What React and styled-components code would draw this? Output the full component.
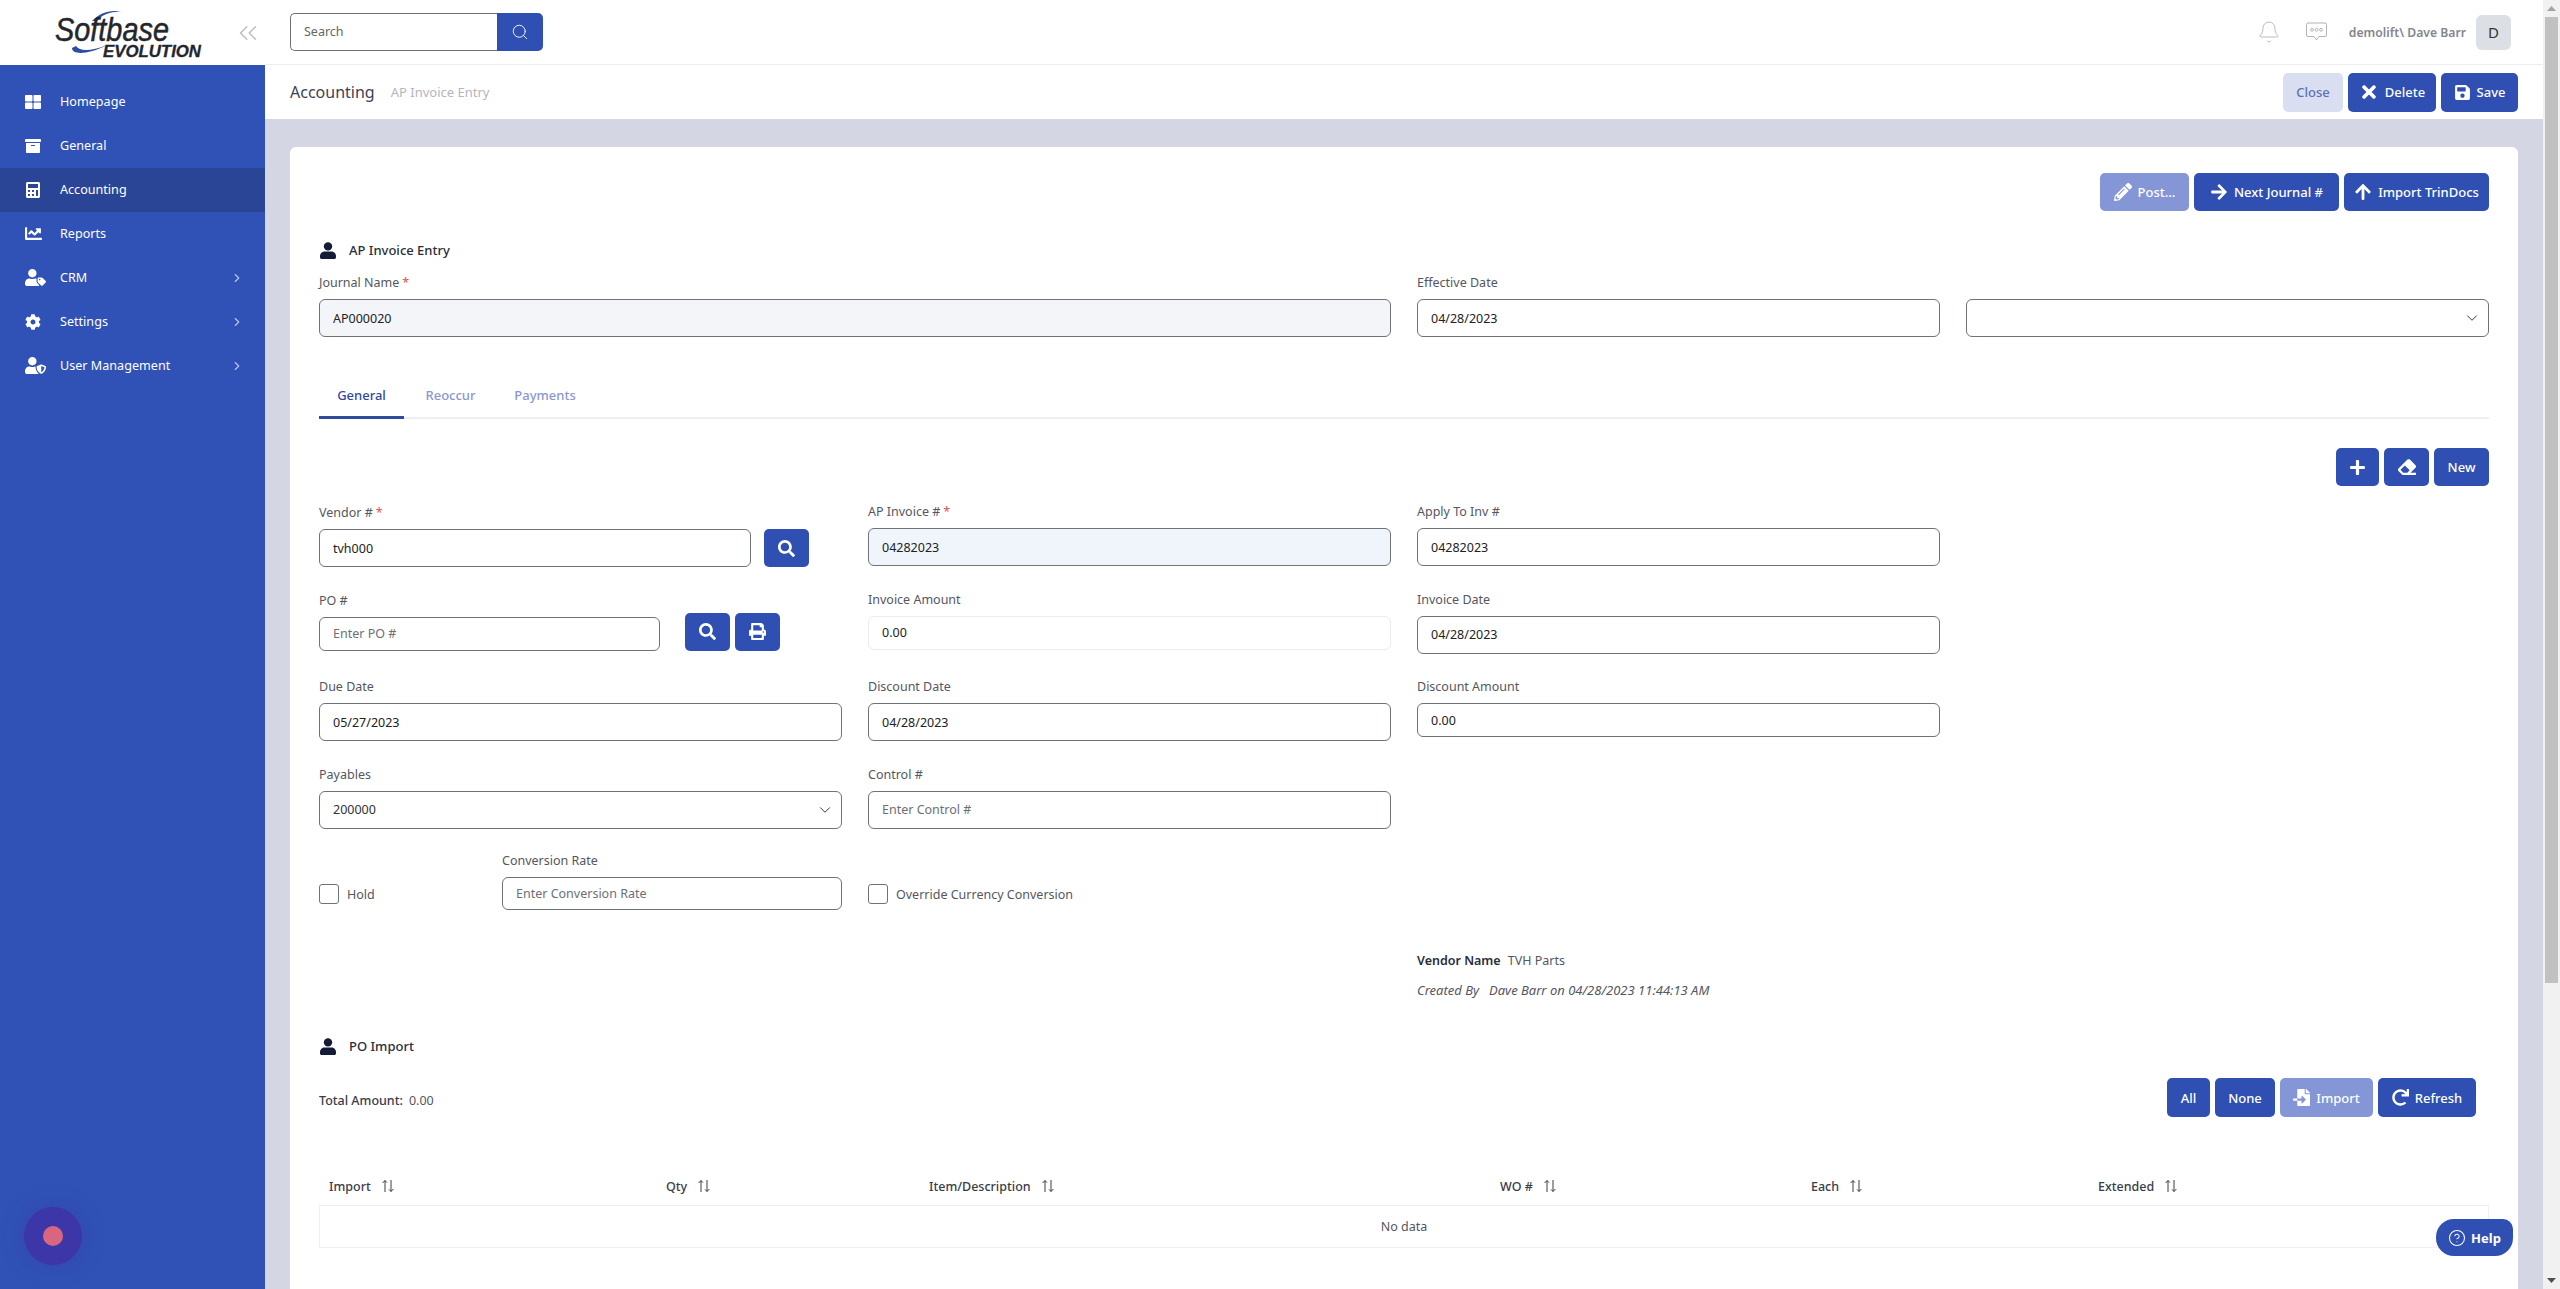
import React from 'react'
import styled, { createGlobalStyle } from 'styled-components'
import { Search, Bell, ChevronRight, ChevronDown, ChevronsLeft, CircleHelp } from 'lucide-react'
import {
  FaThLarge,
  FaArchive,
  FaCalculator,
  FaChartLine,
  FaUserTag,
  FaCog,
  FaUserShield,
  FaTimes,
  FaSave,
  FaPencilAlt,
  FaArrowRight,
  FaArrowUp,
  FaPlus,
  FaEraser,
  FaSearch,
  FaPrint,
  FaFileImport,
  FaRedo,
} from 'react-icons/fa'

const blue = '#2f4fb2'
const font = '"Noto Sans", "Open Sans", sans-serif'

const GlobalStyle = createGlobalStyle`
  * { box-sizing: border-box; }
  html, body { margin: 0; padding: 0; height: 100%; overflow: hidden; }
  body { font-family: ${font}; font-size: 13px; color: #333; background: #fff; }
`

const Shell = styled.div`
  display: flex;
  height: 1289px;
  overflow: hidden;
`

const Sidebar = styled.aside`
  width: 265px;
  flex: none;
  background: #3052b6;
  display: flex;
  flex-direction: column;
`

const Brand = styled.div`
  height: 65px;
  background: #fff;
  display: flex;
  align-items: center;
  justify-content: space-between;
  padding: 0 2px 0 50px;
  color: #bdbdc4;
`

const Nav = styled.nav`
  padding-top: 15px;
`

const NavItem = styled.div`
  height: 44px;
  display: flex;
  align-items: center;
  padding: 0 21px 1px 25px;
  color: #fff;
  font-size: 12.6px;
  background: ${p => (p.$active ? '#2b4596' : 'transparent')};

  span { flex: 1; }
`

const NavIcon = styled.div`
  width: 35px;
  display: flex;
  align-items: center;
`

const Main = styled.main`
  flex: 1;
  min-width: 0;
  background: #d5d6e4;
  overflow: hidden;
`

const TopBar = styled.header`
  height: 65px;
  background: #fff;
  border-bottom: 1px solid #eeeef2;
  display: flex;
  align-items: center;
  justify-content: space-between;
  padding: 0 32px 0 25px;
`

const SearchBox = styled.div`
  display: flex;
  width: 253px;
  height: 38px;
  margin-top: -1px;
`

const SearchInput = styled.input`
  width: 207px;
  border: 1px solid #6b7078;
  border-right: none;
  border-radius: 5px 0 0 5px;
  padding: 0 13px;
  font: 12.5px ${font};
  outline: none;
  &::placeholder { color: #666; }
`

const SearchBtn = styled.button`
  flex: 1;
  border: none;
  background: ${blue};
  border-radius: 0 5px 5px 0;
  color: #fff;
  display: flex;
  align-items: center;
  justify-content: center;
`

const UserArea = styled.div`
  display: flex;
  align-items: center;
  color: #a9a9b0;
`

const UserName = styled.span`
  margin: 0 10px 0 22px;
  font-size: 12.2px;
  font-weight: 600;
  color: #85858f;
`

const ChatWrap = styled.div`
  margin-left: 25px;
  display: flex;
`

const Avatar = styled.div`
  width: 35px;
  height: 35px;
  border-radius: 6px;
  background: #dcdfe3;
  color: #333;
  font-size: 15px;
  display: flex;
  align-items: center;
  justify-content: center;
`

const SubBar = styled.div`
  height: 54px;
  background: #fff;
  display: flex;
  align-items: center;
  padding: 0 25px;
`

const Crumb = styled.div`
  font-size: 16px;
  color: #3f4254;
`

const CrumbSub = styled.div`
  font-size: 13px;
  color: #b5b5c3;
  margin-left: 16px;
  flex: 1;
`

const ButtonRow = styled.div`
  display: flex;
  justify-content: flex-end;
  gap: 5px;
  margin-right: ${p => p.$inset || 0}px;
`

const Btn = styled.button`
  width: ${p => p.$w}px;
  height: ${p => p.$h || 38}px;
  flex: none;
  border: none;
  border-radius: 5px;
  font: 500 13px ${font};
  display: flex;
  align-items: center;
  justify-content: center;
  gap: 6px;
  padding: 0;
  color: ${p => (p.$kind === 'soft' ? '#5f70b5' : '#fff')};
  background: ${p => (p.$kind === 'soft' ? '#d9dff1' : p.$kind === 'muted' ? '#8496d6' : blue)};
`

const Content = styled.div`
  padding: 28px 25px 0;
`

const Card = styled.section`
  background: #fff;
  border-radius: 6px;
  padding: 26px 29px 60px;
`

const SectionTitle = styled.div`
  height: 20px;
  margin-top: ${p => p.$top}px;
  display: flex;
  align-items: center;
  gap: 13px;
  padding-left: 1px;
  font-size: 13px;
  font-weight: 500;
  color: #2a2d3a;
`

const FourCols = styled.div`
  display: grid;
  grid-template-columns: repeat(4, 523px);
  column-gap: 26px;
`

const TopGrid = styled(FourCols)`
  margin-top: 14px;
`

const FormGrid = styled(FourCols)`
  margin-top: 17px;
  grid-auto-rows: 64px;
  row-gap: 23.5px;
`

const Field = styled.div`
  grid-column: span ${p => p.$span || 1};
  min-width: 0;
  flex: ${p => (p.$grow ? 1 : 'none')};
  width: ${p => (p.$w ? `${p.$w}px` : 'auto')};
`

const Label = styled.label`
  display: block;
  height: 18px;
  line-height: 18px;
  margin-bottom: 7px;
  font-size: 12.5px;
  color: #55565f;

  em { font-style: normal; color: #d9534f; margin-left: 3px; }
`

const Input = styled.input`
  display: block;
  width: ${p => (p.$w ? `${p.$w}px` : '100%')};
  height: ${p => p.$h || 38}px;
  padding: 0 13px;
  font: 12.5px ${font};
  color: #222;
  outline: none;
  border-radius: 6px;
  border: 1px solid ${p => (p.$disabled ? '#ececef' : '#6f7378')};
  background: ${p => p.$bg || '#fff'};
  &::placeholder { color: #6d6f76; }
`

const Select = styled.div`
  height: ${p => p.$h || 38}px;
  border: 1px solid #6f7378;
  border-radius: 6px;
  padding: 0 7px 0 13px;
  display: flex;
  align-items: center;
  justify-content: space-between;
  font-size: 12.5px;
  color: #333;
`

const Tabs = styled.div`
  margin-top: 39px;
  display: flex;
  height: 43px;
  border-bottom: 2px solid #eeeff3;
`

const Tab = styled.div`
  height: 43px;
  padding-bottom: 3px;
  width: ${p => p.$w}px;
  display: flex;
  align-items: center;
  justify-content: center;
  font-size: 13px;
  font-weight: 500;
  color: ${p => (p.$active ? '#2f4a9e' : '#8b97cc')};
  border-bottom: 3px solid ${p => (p.$active ? '#2f4a9e' : 'transparent')};
`

const ToolRow = styled(ButtonRow)`
  margin-top: 29px;
`

const InlineRow = styled.div`
  display: flex;
  align-items: flex-end;
  gap: ${p => p.$gap || 0}px;
  height: ${p => p.$h || 64}px;
`

const Check = styled.div`
  width: 20px;
  height: 20px;
  flex: none;
  border: 1px solid #6f7378;
  border-radius: 3px;
`

const CheckLabel = styled.div`
  display: flex;
  align-items: center;
  gap: 8px;
  height: 20px;
  margin-bottom: 6px;
  font-size: 12.5px;
  color: #55565f;
  width: ${p => (p.$w ? `${p.$w}px` : 'auto')};
  flex: none;
`

const Meta = styled.div`
  margin: 35px 0 0 1098px;
  font-size: 12.5px;
  color: #55565f;
`

const MetaLine = styled.div`
  height: 18px;
  line-height: 18px;
  margin-bottom: 11px;
  font-style: ${p => (p.$italic ? 'italic' : 'normal')};
  font-size: ${p => (p.$italic ? 13 : 12.5)}px;

  b { font-weight: 600; color: #2a2d3a; margin-right: 7px; }
  i { margin-right: 10px; }
`

const TotalRow = styled.div`
  margin-top: 22px;
  display: flex;
  align-items: center;
  justify-content: space-between;
  font-size: 12.5px;
  color: #55565f;

  b { font-weight: 500; color: #3a3c48; margin-right: 6px; }
`

const TotalText = styled.div`
  padding-top: 5px;
`

const TableHead = styled.div`
  margin-top: 50px;
  display: grid;
  grid-template-columns: 337px 263px 571px 311px 287px 1fr;
  height: 38px;
  align-items: center;
  padding-left: 10px;
  font-size: 12.5px;
  font-weight: 500;
  color: #3a3c48;
`

const HeadCell = styled.div`
  display: flex;
  align-items: center;
  gap: 10px;
`

const EmptyRow = styled.div`
  height: 43px;
  border: 1px solid #eeeff3;
  display: flex;
  align-items: center;
  justify-content: center;
  font-size: 12.5px;
  color: #55565f;
`

const ScrollTrack = styled.div`
  width: 17px;
  flex: none;
  background: #f1f1f1;
  display: flex;
  flex-direction: column;
  align-items: center;
  color: #505050;
`

const ScrollArrow = styled.div`
  height: 17px;
  width: 100%;
  flex: none;
  display: flex;
  align-items: center;
  justify-content: center;
`

const ScrollThumb = styled.div`
  width: 13px;
  height: 966px;
  flex: none;
  background: #c1c1c1;
`

const ScrollGap = styled.div`
  flex: 1;
`

const HelpBtn = styled.button`
  position: fixed;
  right: 47px;
  bottom: 33px;
  width: 77px;
  height: 37px;
  border: none;
  border-radius: 18px 10px 18px 18px;
  background: ${blue};
  color: #fff;
  font: 700 13px ${font};
  display: flex;
  align-items: center;
  justify-content: center;
  gap: 5px;
`

const RecordDot = styled.div`
  position: fixed;
  left: 24px;
  bottom: 24px;
  width: 58px;
  height: 58px;
  border-radius: 50%;
  background: #3c36a9;
  box-shadow: 0 0 22px rgba(60, 54, 169, 0.45);
  display: flex;
  align-items: center;
  justify-content: center;

  &::after {
    content: '';
    width: 20px;
    height: 20px;
    border-radius: 50%;
    background: #d8667f;
  }
`

const Logo = () => (
  <svg width="155" height="58" viewBox="50 5 155 58" aria-label="Softbase Evolution">
    <path d="M92 22 C100 13 112 10 122 13 C113 12 103 15 96 22 Z" fill="#2d4d9e" />
    <path d="M72 49 C72 56 88 56 107 46 C92 52 80 53 76 47 Z" fill="#2d4d9e" />
    <text x="55" y="42" fontFamily="Liberation Sans" fontStyle="italic" fontSize="34" fill="#23262d" stroke="#23262d" strokeWidth="0.5" textLength="114" lengthAdjust="spacingAndGlyphs">Softbase</text>
    <text x="103" y="58" fontFamily="Liberation Sans" fontStyle="italic" fontWeight="700" fontSize="16" fill="#23262d" stroke="#23262d" strokeWidth="0.3" textLength="98" lengthAdjust="spacingAndGlyphs">EVOLUTION</text>
  </svg>
)

const PersonIcon = () => (
  <svg width="16" height="17" viewBox="0 0 16 17">
    <circle cx="8" cy="4.4" r="4.2" fill="#141b36" />
    <path d="M0 14.2 C0 11.4 2.2 9.6 4.6 9.6 H11.4 C13.8 9.6 16 11.4 16 14.2 V15.2 C16 16.2 15.2 17 14.2 17 H1.8 C.8 17 0 16.2 0 15.2 Z" fill="#141b36" />
  </svg>
)

const ChatIcon = () => (
  <svg width="21" height="20" viewBox="0 0 21 20" fill="none" stroke="#a9a9b0" strokeWidth="0.9">
    <path d="M2 1 H19 A1.5 1.5 0 0 1 20.5 2.5 V13 A1.5 1.5 0 0 1 19 14.5 H13 L10.5 18 L8 14.5 H2 A1.5 1.5 0 0 1 .5 13 V2.5 A1.5 1.5 0 0 1 2 1 Z" />
    <circle cx="6" cy="7.8" r="1.4" />
    <circle cx="10.5" cy="7.8" r="1.4" />
    <circle cx="15" cy="7.8" r="1.4" />
  </svg>
)

const SortIcon = () => (
  <svg width="14" height="14" viewBox="0 0 14 14" fill="none" stroke="#3a3c48" strokeWidth="1">
    <path d="M4 13 V1.5 M1.6 4 L4 1.5 L6 3.6" />
    <path d="M10 1 V12.5 M8 10.4 L10 12.5 L12.4 10" />
  </svg>
)

const navItems = [
  { label: 'Homepage', icon: <FaThLarge size={16} /> },
  { label: 'General', icon: <FaArchive size={16} /> },
  { label: 'Accounting', icon: <FaCalculator size={16} />, active: true },
  { label: 'Reports', icon: <FaChartLine size={17} /> },
  { label: 'CRM', icon: <FaUserTag size={21} />, more: true },
  { label: 'Settings', icon: <FaCog size={16} />, more: true },
  { label: 'User Management', icon: <FaUserShield size={21} />, more: true },
]

const columns = ['Import', 'Qty', 'Item/Description', 'WO #', 'Each', 'Extended']

const Required = () => <em>*</em>

export default function App() {
  return (
    <Shell>
      <GlobalStyle />
      <Sidebar>
        <Brand>
          <Logo />
          <ChevronsLeft size={30} strokeWidth={1.2} />
        </Brand>
        <Nav>
          {navItems.map(item => (
            <NavItem key={item.label} $active={item.active}>
              <NavIcon>{item.icon}</NavIcon>
              <span>{item.label}</span>
              {item.more && <ChevronRight size={14} color="#b9c4e8" />}
            </NavItem>
          ))}
        </Nav>
      </Sidebar>

      <Main>
        <TopBar>
          <SearchBox>
            <SearchInput placeholder="Search" />
            <SearchBtn><Search size={18} strokeWidth={1.2} /></SearchBtn>
          </SearchBox>
          <UserArea>
            <Bell size={24} strokeWidth={0.8} />
            <ChatWrap><ChatIcon /></ChatWrap>
            <UserName>demolift\ Dave Barr</UserName>
            <Avatar>D</Avatar>
          </UserArea>
        </TopBar>

        <SubBar>
          <Crumb>Accounting</Crumb>
          <CrumbSub>AP Invoice Entry</CrumbSub>
          <ButtonRow>
            <Btn $kind="soft" $w={60} $h={39}>Close</Btn>
            <Btn $w={88} $h={39}><FaTimes size={20} />Delete</Btn>
            <Btn $w={77} $h={39}><FaSave size={17} />Save</Btn>
          </ButtonRow>
        </SubBar>

        <Content>
          <Card>
            <ButtonRow>
              <Btn $kind="muted" $w={89}><FaPencilAlt size={18} />Post...</Btn>
              <Btn $w={145}><FaArrowRight size={18} />Next Journal #</Btn>
              <Btn $w={145}><FaArrowUp size={18} />Import TrinDocs</Btn>
            </ButtonRow>

            <SectionTitle $top={29}><PersonIcon />AP Invoice Entry</SectionTitle>

            <TopGrid>
              <Field $span={2}>
                <Label>Journal Name<Required /></Label>
                <Input defaultValue="AP000020" readOnly $bg="#f3f5f9" />
              </Field>
              <Field>
                <Label>Effective Date</Label>
                <Input defaultValue="04/28/2023" readOnly />
              </Field>
              <Field>
                <Label>&nbsp;</Label>
                <Select><span /><ChevronDown size={18} strokeWidth={1.3} /></Select>
              </Field>
            </TopGrid>

            <Tabs>
              <Tab $active $w={85}>General</Tab>
              <Tab $w={93}>Reoccur</Tab>
              <Tab $w={96}>Payments</Tab>
            </Tabs>

            <ToolRow>
              <Btn $w={43}><FaPlus size={17} /></Btn>
              <Btn $w={45}><FaEraser size={18} /></Btn>
              <Btn $w={55}>New</Btn>
            </ToolRow>

            <FormGrid>
              <InlineRow $gap={13}>
                <Field $w={432}>
                  <Label>Vendor #<Required /></Label>
                  <Input defaultValue="tvh000" readOnly />
                </Field>
                <Btn $w={45} $h={38}><FaSearch size={17} /></Btn>
              </InlineRow>
              <Field>
                <Label>AP Invoice #<Required /></Label>
                <Input defaultValue="04282023" readOnly $bg="#f0f5fc" />
              </Field>
              <Field>
                <Label>Apply To Inv #</Label>
                <Input defaultValue="04282023" readOnly />
              </Field>
              <div />

              <InlineRow $gap={5} $h={60}>
                <Field $w={361}>
                  <Label>PO #</Label>
                  <Input placeholder="Enter PO #" $h={34} $w={341} />
                </Field>
                <Btn $w={45}><FaSearch size={17} /></Btn>
                <Btn $w={45}><FaPrint size={17} /></Btn>
              </InlineRow>
              <Field>
                <Label>Invoice Amount</Label>
                <Input defaultValue="0.00" readOnly $h={34} $disabled />
              </Field>
              <Field>
                <Label>Invoice Date</Label>
                <Input defaultValue="04/28/2023" readOnly />
              </Field>
              <div />

              <Field>
                <Label>Due Date</Label>
                <Input defaultValue="05/27/2023" readOnly />
              </Field>
              <Field>
                <Label>Discount Date</Label>
                <Input defaultValue="04/28/2023" readOnly />
              </Field>
              <Field>
                <Label>Discount Amount</Label>
                <Input defaultValue="0.00" readOnly $h={34} />
              </Field>
              <div />

              <Field>
                <Label>Payables</Label>
                <Select>200000<ChevronDown size={18} strokeWidth={1.3} /></Select>
              </Field>
              <Field>
                <Label>Control #</Label>
                <Input placeholder="Enter Control #" />
              </Field>
              <div />
              <div />

              <InlineRow $h={57}>
                <CheckLabel $w={183}><Check />Hold</CheckLabel>
                <Field $grow>
                  <Label>Conversion Rate</Label>
                  <Input placeholder="Enter Conversion Rate" $h={33} />
                </Field>
              </InlineRow>
              <InlineRow $h={57}>
                <CheckLabel><Check />Override Currency Conversion</CheckLabel>
              </InlineRow>
            </FormGrid>

            <Meta>
              <MetaLine><b>Vendor Name</b>TVH Parts</MetaLine>
              <MetaLine $italic><i>Created By</i>Dave Barr on 04/28/2023 11:44:13 AM</MetaLine>
            </Meta>

            <SectionTitle $top={37}><PersonIcon />PO Import</SectionTitle>

            <TotalRow>
              <TotalText><b>Total Amount:</b>0.00</TotalText>
              <ButtonRow $inset={13}>
                <Btn $w={43} $h={39}>All</Btn>
                <Btn $w={60} $h={39}>None</Btn>
                <Btn $kind="muted" $w={93} $h={39}><FaFileImport size={17} />Import</Btn>
                <Btn $w={98} $h={39}><FaRedo size={17} />Refresh</Btn>
              </ButtonRow>
            </TotalRow>

            <TableHead>
              {columns.map(col => (
                <HeadCell key={col}>{col}<SortIcon /></HeadCell>
              ))}
            </TableHead>
            <EmptyRow>No data</EmptyRow>
          </Card>
        </Content>
      </Main>

      <ScrollTrack>
        <ScrollArrow>
          <svg width="9" height="5" viewBox="0 0 9 5"><path d="M4.5 0 L9 5 H0 Z" fill="#a3a3a3" /></svg>
        </ScrollArrow>
        <ScrollThumb />
        <ScrollGap />
        <ScrollArrow>
          <svg width="9" height="5" viewBox="0 0 9 5"><path d="M0 0 H9 L4.5 5 Z" fill="#505050" /></svg>
        </ScrollArrow>
      </ScrollTrack>

      <HelpBtn><CircleHelp size={18} strokeWidth={1.4} />Help</HelpBtn>
      <RecordDot />
    </Shell>
  )
}
